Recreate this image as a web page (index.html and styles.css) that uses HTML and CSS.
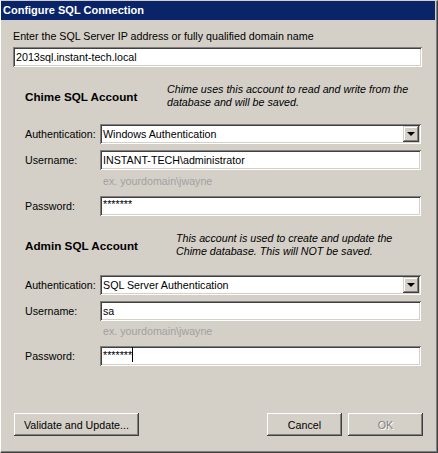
FILE: index.html
```html
<!DOCTYPE html>
<html>
    <head>
        <title>Configure SQL Connection</title>
        <meta name="viewport" content="width=device-width, initial-scale=1.0">
        <link rel="stylesheet" href="styles.css">
    </head>
    <body>
        <div class="window">
            <div class="titlebar">Configure SQL Connection</div>
            <div class="content">
                <p class="prompt">Enter the SQL Server IP address or fully qualified domain name</p>
                <div class="field server">2013sql.instant-tech.local</div>

                <div class="account-head">
                    <h3>Chime SQL Account</h3>
                    <p class="note">Chime uses this account to read and write from the database and will be saved.</p>
                </div>
                <div class="row first">
                    <span class="label">Authentication:</span>
                    <div class="field combo">Windows Authentication<span class="drop"></span></div>
                </div>
                <div class="row">
                    <span class="label">Username:</span>
                    <div class="field">INSTANT-TECH\administrator</div>
                </div>
                <p class="hint">ex. yourdomain\jwayne</p>
                <div class="row pass">
                    <span class="label">Password:</span>
                    <div class="field secret">*******</div>
                </div>

                <div class="account-head">
                    <h3>Admin SQL Account</h3>
                    <p class="note shifted">This account is used to create and update the Chime database. This will NOT be saved.</p>
                </div>
                <div class="row first admin">
                    <span class="label">Authentication:</span>
                    <div class="field combo">SQL Server Authentication<span class="drop"></span></div>
                </div>
                <div class="row">
                    <span class="label">Username:</span>
                    <div class="field">sa</div>
                </div>
                <p class="hint tight">ex. yourdomain\jwayne</p>
                <div class="row pass">
                    <span class="label">Password:</span>
                    <div class="field secret"><span class="caret">*******</span></div>
                </div>

                <div class="buttons">
                    <button type="button" class="validate">Validate and Update...</button>
                    <button type="button" class="push">Cancel</button>
                    <button type="button" class="push" disabled>OK</button>
                </div>
            </div>
        </div>
    </body>
</html>
```

FILE: styles.css
```css
body {
    margin: 0;
    background-color: #d4d0c8;
    font-family: "Liberation Sans", Arial, sans-serif;
    font-size: 10.7px;
    line-height: 13px;
    color: #000;
}
h3, p {
    margin: 0;
}
.window {
    box-sizing: border-box;
    width: 438px;
    height: 453px;
    background-color: #d4d0c8;
    border-top: 1px solid #d4d0c8;
    border-left: 1px solid #ffffff;
    border-right: 1px solid #404040;
    border-bottom: 1px solid #404040;
    box-shadow: inset -1px -1px 0 0 #808080;
    padding-right: 2px;
}
.titlebar {
    height: 19px;
    line-height: 19px;
    padding-left: 2px;
    background-color: #0a246a;
    color: #fff;
    font-size: 11px;
    font-weight: bold;
}
.content {
    padding: 10px 13px 0 12px;
}
.field {
    box-sizing: border-box;
    position: relative;
    height: 20px;
    line-height: 20px;
    padding-left: 3px;
    background-color: #fff;
    box-shadow: inset 1px 1px 0 0 #808080, inset -1px -1px 0 0 #fff,
                inset 2px 2px 0 0 #404040, inset -2px -2px 0 0 #d4d0c8;
    white-space: nowrap;
}
.server {
    margin-top: 4px;
    width: 409px;
}
.account-head {
    display: flex;
    align-items: center;
    margin-top: 16px;
    margin-left: 12px;
}
.account-head h3 {
    width: 142px;
    font-size: 11.7px;
    font-weight: bold;
}
.note {
    width: 245px;
    font-style: italic;
}
.note.shifted {
    margin-left: 9px;
    width: 236px;
}
.row {
    display: grid;
    grid-template-columns: 75px 321px;
    align-items: center;
    margin-top: 6px;
    margin-left: 12px;
}
.row.first {
    margin-top: 15px;
}
.row.admin {
    margin-top: 17px;
}
.row.pass {
    margin-top: 8px;
}
.hint {
    margin: 5px 0 0 90px;
    color: #a0a0a0;
}
.hint.tight {
    margin-top: 4px;
}
.secret {
    line-height: 16px;
}
.caret {
    display: inline-block;
    height: 15px;
    border-right: 1px solid #000;
    vertical-align: top;
    margin-top: 1px;
}
.drop {
    position: absolute;
    top: 2px;
    right: 2px;
    width: 16px;
    height: 16px;
    box-sizing: border-box;
    background-color: #d4d0c8;
    box-shadow: inset -1px -1px 0 0 #404040, inset 1px 1px 0 0 #d4d0c8,
                inset -2px -2px 0 0 #808080, inset 2px 2px 0 0 #fff;
}
.drop::after {
    content: "";
    position: absolute;
    left: 4px;
    top: 6px;
    border-left: 4px solid transparent;
    border-right: 4px solid transparent;
    border-top: 4px solid #000;
}
.buttons {
    display: flex;
    gap: 6px;
    margin-top: 47px;
    margin-left: 1px;
    margin-right: -1px;
}
button {
    box-sizing: border-box;
    height: 23px;
    padding: 0;
    border: none;
    background-color: #d4d0c8;
    font-family: "Liberation Sans", Arial, sans-serif;
    font-size: 10.7px;
    color: #000;
    box-shadow: inset -1px -1px 0 0 #404040, inset 1px 1px 0 0 #fff,
                inset -2px -2px 0 0 #808080, inset 2px 2px 0 0 #d4d0c8;
}
.validate {
    width: 125px;
    margin-right: auto;
}
.push {
    width: 75px;
}
button:disabled {
    color: #808080;
    text-shadow: 1px 1px 0 #fff;
}
```
